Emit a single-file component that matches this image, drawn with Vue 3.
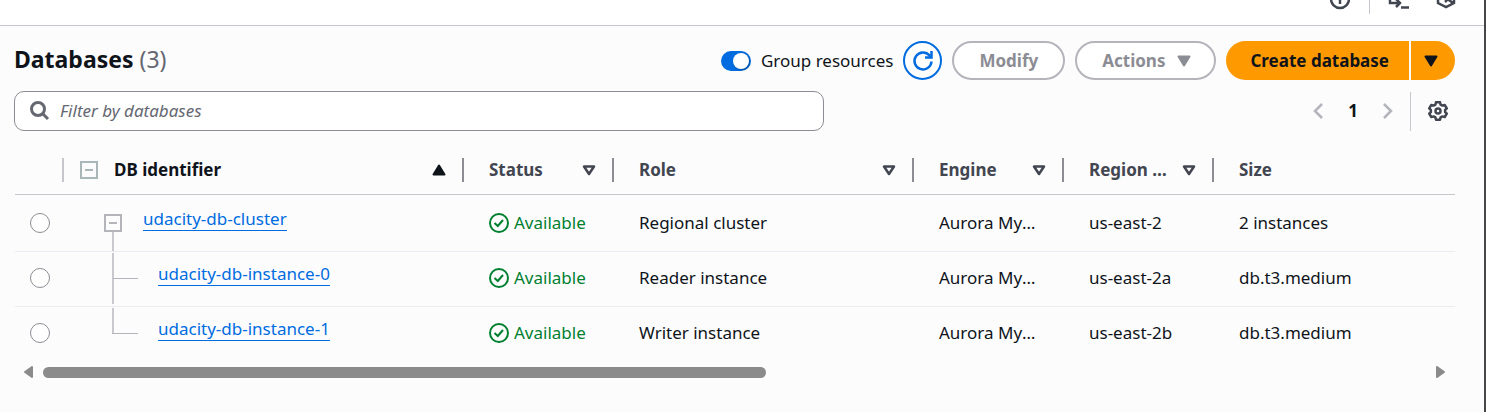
<script setup>
import { ref } from 'vue'

const grouped = ref(true)
const selected = ref('')
const query = ref('')

const columns = [
  { key: 'status', label: 'Status', sortable: true },
  { key: 'role', label: 'Role', sortable: true },
  { key: 'engine', label: 'Engine', sortable: true },
  { key: 'region', label: 'Region & AZ', sortable: true },
  { key: 'size', label: 'Size', sortable: false }
]

const rows = [
  { id: 'udacity-db-cluster', kind: 'root', role: 'Regional cluster', engine: 'Aurora MySQL', region: 'us-east-2', size: '2 instances' },
  { id: 'udacity-db-instance-0', kind: 'branch', role: 'Reader instance', engine: 'Aurora MySQL', region: 'us-east-2a', size: 'db.t3.medium' },
  { id: 'udacity-db-instance-1', kind: 'leaf', role: 'Writer instance', engine: 'Aurora MySQL', region: 'us-east-2b', size: 'db.t3.medium' }
]
</script>

<template>
  <div class="page">
    <header class="topbar">
      <button class="bare" aria-label="Information">
        <svg width="20" height="25" viewBox="0 0 20 25"><circle cx="10" cy="-1" r="9" /><path d="M10 -3V4" /></svg>
      </button>
      <span class="topbar-rule"></span>
      <button class="bare shell" aria-label="Open shell">
        <svg width="22" height="25" viewBox="0 0 22 25"><path d="M2 -3V3H11M7 -2L12 3L8 7M13 7.500H21" /></svg>
      </button>
      <button class="bare hex" aria-label="Assistant">
        <svg width="20" height="25" viewBox="0 0 20 25"><path d="M2 -4V3L10 7L18 3V-4M10 -2L17 3M9 2L13 -2" /></svg>
      </button>
    </header>

    <main class="content">
      <div class="heading">
        <h1>Databases <span class="count">(3)</span></h1>
        <div class="actions">
          <label class="switch">
            <input v-model="grouped" type="checkbox" role="switch" />
            <span>Group resources</span>
          </label>
          <button class="btn refresh" aria-label="Refresh">
            <svg width="22" height="22" viewBox="0 0 22 22"><path d="M19.500 11.500A8.500 8.500 0 1 1 17.500 5.400L19 7" /><path d="M19.500 1V7.500H13" /></svg>
          </button>
          <button class="btn modify" disabled>Modify</button>
          <button class="btn menu" disabled>
            Actions
            <svg width="14" height="12" viewBox="0 0 14 12"><path d="M1.500 1.500H12.500L7 10.500Z" /></svg>
          </button>
          <div class="split">
            <button class="create">Create database</button>
            <button class="more" aria-label="More create options">
              <svg width="14" height="12" viewBox="0 0 14 12"><path d="M1.500 1.500H12.500L7 10.500Z" /></svg>
            </button>
          </div>
        </div>
      </div>

      <div class="tools">
        <label class="search">
          <svg width="20" height="20" viewBox="0 0 20 20"><circle cx="8" cy="8" r="6.500" /><path d="M12.500 12.500L18 18" /></svg>
          <input v-model="query" type="text" placeholder="Filter by databases" aria-label="Filter by databases" />
        </label>
        <nav class="pager" aria-label="Pagination">
          <button class="bare" aria-label="Previous page" disabled>
            <svg width="12" height="18" viewBox="0 0 12 18"><path d="M10 2L3 9L10 16" /></svg>
          </button>
          <button class="bare current" aria-current="page">1</button>
          <button class="bare" aria-label="Next page" disabled>
            <svg width="12" height="18" viewBox="0 0 12 18"><path d="M2 2L9 9L2 16" /></svg>
          </button>
          <button class="bare settings" aria-label="Preferences">
            <svg width="20" height="20" viewBox="0 0 20 20">
              <path d="M8 1.200H12L12.600 3.600L14.400 4.600L16.700 3.900L18.800 7.300L17.100 9V11L18.800 12.700L16.700 16.100L14.400 15.400L12.600 16.400L12 18.800H8L7.400 16.400L5.600 15.400L3.300 16.100L1.200 12.700L2.900 11V9L1.200 7.300L3.300 3.900L5.600 4.600L7.400 3.600Z" />
              <circle cx="10" cy="10" r="2.500" />
            </svg>
          </button>
        </nav>
      </div>

      <table>
        <colgroup>
          <col class="c-select" /><col class="c-id" /><col class="c-mid" /><col class="c-role" />
          <col class="c-mid" /><col class="c-mid" /><col />
        </colgroup>
        <thead>
          <tr>
            <th class="light" aria-label="Selection"></th>
            <th aria-sort="ascending">
              <div class="head dark">
                <button class="bare fold" aria-label="Collapse all">
                  <svg width="18" height="18" viewBox="0 0 18 18"><rect x="1" y="1" width="16" height="16" /><path d="M5 9H13" /></svg>
                </button>
                <span class="label">DB identifier</span>
                <svg class="sort" width="14" height="12" viewBox="0 0 14 12"><path class="solid" d="M1.500 10.500H12.500L7 1.500Z" /></svg>
              </div>
            </th>
            <th v-for="c in columns" :key="c.key">
              <div class="head">
                <span class="label">{{ c.label }}</span>
                <svg v-if="c.sortable" class="sort" width="14" height="12" viewBox="0 0 14 12"><path class="hollow" d="M2 2.500H12L7 10Z" /></svg>
              </div>
            </th>
          </tr>
        </thead>
        <tbody>
          <tr v-for="r in rows" :key="r.id" :class="{ nested: r.kind !== 'root' }">
            <td class="select">
              <input v-model="selected" type="radio" name="database" :value="r.id" :aria-label="r.id" />
            </td>
            <td class="id">
              <div class="node" :class="r.kind">
                <svg v-if="r.kind === 'root'" width="34" height="56" viewBox="0 0 34 56">
                  <rect x="1" y="20" width="16" height="16" /><path class="dash" d="M5 28H13" /><path class="stem" d="M9 37V56" />
                </svg>
                <svg v-else-if="r.kind === 'branch'" width="34" height="52" viewBox="0 0 34 52">
                  <path class="stem" d="M9 1V52" /><path class="twig" d="M9 26.500H34" />
                </svg>
                <svg v-else width="34" height="52" viewBox="0 0 34 52">
                  <path class="stem" d="M9 1V26" /><path class="twig" d="M8 26.500H34" />
                </svg>
                <a href="#">{{ r.id }}</a>
              </div>
            </td>
            <td>
              <span class="status">
                <svg width="20" height="20" viewBox="0 0 20 20"><circle cx="10" cy="10" r="9" /><path d="M5.500 10L8.800 13L14 7" /></svg>
                Available
              </span>
            </td>
            <td>{{ r.role }}</td>
            <td>{{ r.engine }}</td>
            <td>{{ r.region }}</td>
            <td>{{ r.size }}</td>
          </tr>
        </tbody>
      </table>

      <div class="scroller" aria-hidden="true">
        <svg width="9" height="12" viewBox="0 0 9 12"><path d="M8 1V11L1 6Z" /></svg>
        <div class="track"><div class="thumb"></div></div>
        <svg width="9" height="12" viewBox="0 0 9 12"><path d="M1 1V11L8 6Z" /></svg>
      </div>
    </main>
  </div>
</template>

<style>
body {
  margin: 0;
  background: #fcfcfd;
}
</style>

<style scoped>
* {
  box-sizing: border-box;
}
.page {
  min-height: 100vh;
  border-right: 2px solid #45464a;
  background: #fcfcfd;
  color: #0f141a;
  font: 17px/24px "Noto Sans", "Open Sans", sans-serif;
}
svg {
  display: block;
  flex: none;
  fill: none;
  stroke: currentColor;
  stroke-width: 2;
}
button,
input {
  font: inherit;
  color: inherit;
}
.bare {
  display: flex;
  align-items: center;
  padding: 0;
  border: 0;
  background: none;
}
.topbar {
  display: flex;
  justify-content: flex-end;
  height: 26px;
  padding-right: 28px;
  border-bottom: 1px solid #c6c6cd;
  background: #fff;
  color: #424650;
  overflow: hidden;
}
.topbar svg {
  stroke-width: 2.5;
}
.topbar-rule {
  width: 1px;
  height: 14px;
  margin: 0 18px 0 19px;
  background: #c6c6cd;
}
.hex {
  margin-left: 26px;
}
.content {
  padding: 15px 29px 0 14px;
}
.heading,
.actions,
.switch,
.split,
.pager,
.head,
.status,
.scroller {
  display: flex;
  align-items: center;
}
.heading {
  justify-content: space-between;
}
h1 {
  margin: 0 0 4px;
  font-size: 23px;
  line-height: 30px;
  font-weight: 700;
}
.count {
  color: #656871;
  font-weight: 400;
}
.actions {
  gap: 10px;
}
.switch {
  gap: 10px;
}
.switch input {
  appearance: none;
  display: flex;
  width: 30px;
  height: 20px;
  margin: 0;
  padding: 2px;
  border-radius: 10px;
  background: #8c8c94;
}
.switch input::before {
  content: "";
  width: 16px;
  height: 16px;
  border-radius: 50%;
  background: #fff;
  box-shadow: 1px 1px 2px #0004;
}
.switch input:checked {
  justify-content: flex-end;
  background: #006ce0;
}
.btn {
  display: flex;
  align-items: center;
  justify-content: center;
  height: 39px;
  border: 2px solid #b4b4bb;
  border-radius: 20px;
  background: #fff;
  color: #8c8c94;
  font-weight: 700;
}
.refresh {
  width: 39px;
  padding: 0;
  border-color: #006ce0;
  color: #006ce0;
}
.refresh svg {
  stroke-width: 2.5;
}
.modify {
  padding: 0 25px;
}
.menu {
  gap: 12px;
  padding: 0 23px 0 25px;
}
.menu svg,
.more svg {
  fill: currentColor;
  stroke-linejoin: round;
}
.split {
  gap: 2px;
}
.split button {
  height: 39px;
  border: 0;
  background: #ff9900;
  font-weight: 700;
}
.create {
  padding: 0 20px 0 24px;
  border-radius: 20px 0 0 20px;
}
.more {
  display: flex;
  align-items: center;
  width: 44px;
  padding: 0 13px;
  border-radius: 0 20px 20px 0;
}
.tools {
  display: flex;
  justify-content: space-between;
  align-items: center;
  margin-top: 11px;
}
.search {
  display: flex;
  align-items: center;
  gap: 10px;
  flex: 0 1 810px;
  height: 40px;
  padding: 0 15px;
  border: 1px solid #8c8c94;
  border-radius: 10px;
  background: #fff;
  color: #656871;
}
.search svg {
  stroke-width: 3;
}
.search input {
  flex: 1;
  min-width: 0;
  padding: 0;
  border: 0;
  outline: 0;
  background: none;
}
.search input::placeholder {
  color: #656871;
  font-style: italic;
  opacity: 1;
}
.pager {
  color: #b4b4bb;
}
.pager svg {
  stroke-width: 2.5;
}
.pager .bare {
  color: #b4b4bb;
}
.pager .current {
  padding: 0 24px;
  color: #0f141a;
  font-weight: 700;
}
.pager .settings {
  height: 39px;
  margin-left: 16px;
  padding: 0 7px 0 17px;
  border-left: 1px solid #c6c6cd;
  color: #424650;
}
.settings svg {
  stroke-linejoin: round;
}
table {
  width: calc(100% - 1px);
  margin: 15px 0 0 1px;
  border-collapse: separate;
  border-spacing: 0;
  table-layout: fixed;
}
.c-select {
  width: 49px;
}
.c-id {
  width: 400px;
}
.c-mid {
  width: 150px;
}
.c-role {
  width: 300px;
}
th {
  height: 49px;
  padding: 0;
  border-bottom: 1px solid #c6c6cd;
  color: #424650;
  text-align: left;
}
.head {
  height: 24px;
  padding: 0 16px 0 25px;
  border-right: 2px solid #8c8c94;
}
th:last-child .head {
  border-right: 0;
}
.light {
  background: linear-gradient(#c6c6cd, #c6c6cd) right center / 2px 24px no-repeat;
}
.label {
  flex: 1;
  overflow: hidden;
  white-space: nowrap;
  text-overflow: ellipsis;
}
.sort {
  margin-left: 12px;
  stroke-linejoin: round;
}
.solid {
  fill: currentColor;
}
.hollow {
  stroke-width: 2.5;
}
.head.dark {
  padding-left: 16px;
  color: #0f141a;
}
.fold {
  margin-right: 16px;
  color: #aab7b8;
}
td {
  height: 55px;
  padding: 0 24px 0 25px;
  border-bottom: 1px solid #ebebf0;
  overflow: hidden;
  white-space: nowrap;
  text-overflow: ellipsis;
}
.nested td {
  padding-bottom: 2px;
}
tr:last-child td {
  height: 54px;
  border-bottom: 0;
}
td.select {
  padding-left: 15px;
  padding-right: 0;
}
.select input {
  appearance: none;
  display: block;
  width: 20px;
  height: 20px;
  margin: 0;
  border: 1px solid #8c8c94;
  border-radius: 50%;
  background: #fff;
}
.select input:checked {
  border: 6px solid #006ce0;
}
td.id {
  padding-left: 40px;
  padding-right: 0;
}
.node {
  display: flex;
  align-items: center;
  gap: 20px;
  color: #b4b4bb;
}
.root {
  gap: 5px;
}
.stem {
  stroke: #c9c9d0;
}
.twig {
  stroke-width: 1;
}
.node a {
  margin-bottom: 8px;
  border-bottom: 1px solid #006ce0;
  color: #006ce0;
  line-height: 22px;
  text-decoration: none;
}
.status {
  gap: 5px;
  color: #00802f;
}
.scroller {
  gap: 10px;
  margin: 5px 10px 0;
  color: #8b8b8b;
}
.scroller svg {
  fill: currentColor;
  stroke-linejoin: round;
}
.track {
  flex: 1;
}
.thumb {
  width: 52.3%;
  height: 11px;
  border-radius: 6px;
  background: #8b8b8b;
}
</style>
